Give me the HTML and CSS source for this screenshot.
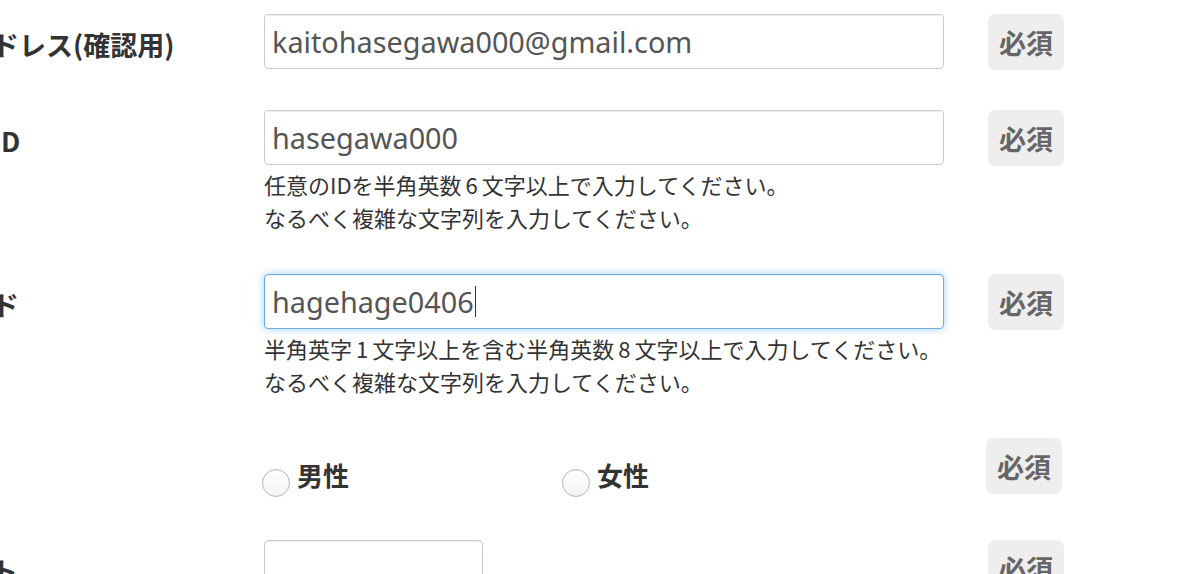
FILE: index.html
```html
<!DOCTYPE html>
<html lang="ja">
<head>
<meta charset="utf-8">
<title>会員登録</title>
<link rel="stylesheet" href="styles.css">
</head>
<body>
<form class="form">
  <div class="row">
    <label class="label">メールアドレス(確認用)</label>
    <div class="field">
      <input class="input" type="text" value="kaitohasegawa000@gmail.com">
    </div>
    <span class="badge">必須</span>
  </div>
  <div class="row">
    <label class="label">ログインID</label>
    <div class="field">
      <input class="input" type="text" value="hasegawa000">
      <p class="help">任意のIDを半角英数<span class="num">6</span>文字以上で入力してください。<br>なるべく複雑な文字列を入力してください。</p>
    </div>
    <span class="badge">必須</span>
  </div>
  <div class="row">
    <label class="label">パスワード</label>
    <div class="field">
      <div class="input focus"><span>hagehage0406</span><span class="caret"></span></div>
      <p class="help">半角英字<span class="num">1</span>文字以上を含む半角英数<span class="num">8</span>文字以上で入力してください。<br>なるべく複雑な文字列を入力してください。</p>
    </div>
    <span class="badge">必須</span>
  </div>
  <div class="row row-gender">
    <label class="label">性別</label>
    <div class="field radios">
      <label class="radio"><input type="radio" name="sex"><span>男性</span></label>
      <label class="radio"><input type="radio" name="sex"><span>女性</span></label>
    </div>
    <span class="badge">必須</span>
  </div>
  <div class="row">
    <label class="label">アンケート</label>
    <div class="field">
      <input class="input small" type="text" value="">
    </div>
    <span class="badge">必須</span>
  </div>
</form>
</body>
</html>
```
FILE: styles.css
```css
html, body {
  margin: 0;
  padding: 0;
  background: #fff;
  overflow: hidden;
}
body {
  font-family: "Noto Sans", "Noto Sans CJK JP", sans-serif;
  color: #333;
}
.form {
  margin-left: -116px;
  padding-top: 14px;
}
.row {
  display: flex;
  align-items: flex-start;
  margin-bottom: 40px;
}
.label {
  width: 380px;
  height: 55px;
  flex: none;
  font-family: "Noto Sans CJK JP", sans-serif;
  font-weight: bold;
  font-size: 27px;
  line-height: 61px;
  color: #333;
  white-space: nowrap;
}
.field {
  width: 680px;
  flex: none;
}
.input {
  box-sizing: border-box;
  display: flex;
  align-items: center;
  width: 680px;
  height: 55px;
  margin: 0;
  padding: 0 7px;
  border: 1px solid #ccc;
  border-radius: 4px;
  background: #fff;
  font-family: "Noto Sans", "Noto Sans CJK JP", sans-serif;
  font-size: 28.8px;
  color: #555;
  box-shadow: inset 0 1px 1px rgba(0,0,0,.075);
  outline: none;
}
.input.focus {
  border-color: #66afe9;
  box-shadow: inset 0 1px 1px rgba(0,0,0,.075), 0 0 8px rgba(102,175,233,.6);
}
.caret {
  display: inline-block;
  width: 1px;
  height: 31px;
  background: #333;
  margin-left: 1px;
}
.input.small {
  width: 219px;
}
.help {
  margin: 0;
  font-family: "Noto Sans CJK JP", sans-serif;
  font-size: 22px;
  line-height: 33px;
  padding-top: 3px;
  color: #333;
  white-space: nowrap;
}
.num {
  margin: 0 4px;
}
.badge {
  flex: none;
  margin-left: 44px;
  width: 76px;
  height: 56px;
  display: flex;
  align-items: center;
  justify-content: center;
  background: #eee;
  border-radius: 7px;
  font-family: "Noto Sans CJK JP", sans-serif;
  font-weight: bold;
  font-size: 27px;
  color: #666;
}
.row-gender {
  margin-bottom: 46px;
}
.radios {
  box-sizing: border-box;
  height: 56px;
  display: flex;
  padding-top: 23px;
  margin-left: -2px;
}
.radio {
  width: 300px;
  display: flex;
  align-items: flex-start;
  font-family: "Noto Sans CJK JP", sans-serif;
  font-weight: bold;
  font-size: 26px;
  color: #333;
}
.radio input {
  -webkit-appearance: none;
  appearance: none;
  box-sizing: border-box;
  flex: none;
  width: 28px;
  height: 28px;
  margin: 8px 7px 0 0;
  border: 1px solid #b8b8b8;
  border-radius: 50%;
  background: linear-gradient(#fff, #f3f3f3);
  box-shadow: inset 0 1px 1px rgba(0,0,0,.05);
}
.radio span {
  line-height: 28px;
}
```
